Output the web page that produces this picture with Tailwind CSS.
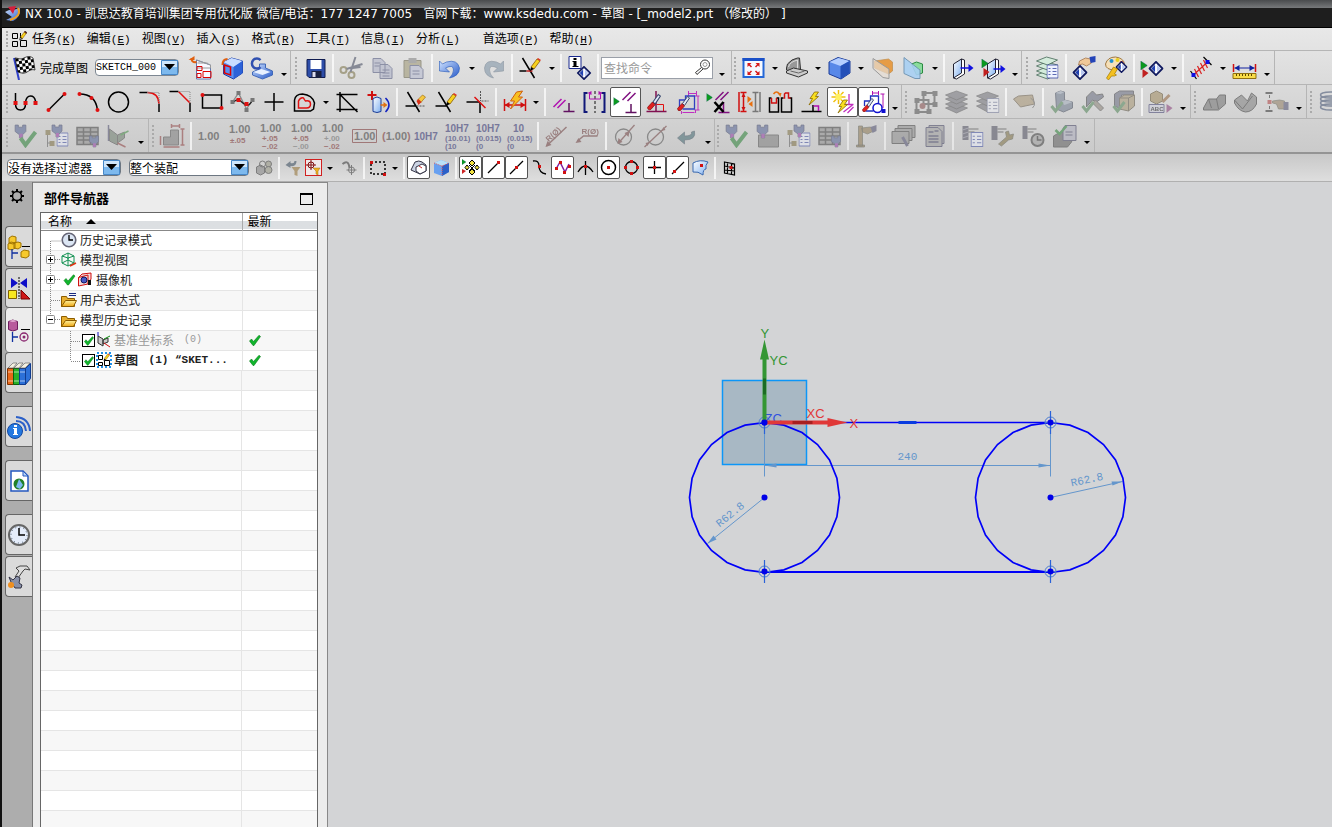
<!DOCTYPE html>
<html lang="zh-CN">
  <head>
    <meta charset="UTF-8" />
    <meta name="viewport" content="width=device-width, initial-scale=1.0" />
    <script src="https://cdn.jsdelivr.net/npm/@tailwindcss/browser@4"></script>
    <title>NX 10.0 - 草图</title>
  </head>
  <body class="flex h-screen flex-col overflow-hidden border-l-2 border-[#111] bg-[#d3d4d6] font-['Noto_Sans_CJK_SC','Liberation_Sans',sans-serif] text-xs text-black">
    <!-- Shared icon parts -->
    <svg class="absolute size-0" aria-hidden="true">
      <defs>
        <pattern id="checker" width="6" height="6" patternUnits="userSpaceOnUse" patternTransform="rotate(-8)">
          <path fill="#fff" d="M0 0h6v6H0z" /><path d="M0 0h3v3H0zM3 3h3v3H3z" />
        </pattern>
        <linearGradient id="blue" x1="0" y1="0" x2="1" y2="1"><stop stop-color="#cfe2ff" /><stop offset="1" stop-color="#2558c8" /></linearGradient>
        <linearGradient id="pale" x1="0" y1="0" x2="1" y2="1"><stop stop-color="#fff" /><stop offset="1" stop-color="#7fb0f0" /></linearGradient>
        <linearGradient id="gold" x1="0" y1="0" x2="0" y2="1"><stop stop-color="#fff3a0" /><stop offset="1" stop-color="#eda512" /></linearGradient>
      </defs>
      <symbol id="dn" viewBox="0 0 12 24"><path d="M3 11h6l-3 3z" /></symbol>
      <symbol id="end" viewBox="0 0 12 24"><path d="M3 17h6l-3 3z" /></symbol>
      <symbol id="check" viewBox="0 0 12 12"><path fill="#10b52c" stroke="#067a18" stroke-width=".6" d="M.5 6.500 2.500 4.500 4.500 7 10 .8 11.500 2 5 11H4z" /></symbol>
      <symbol id="pencil" viewBox="0 0 12 14"><path fill="#f7d21e" stroke="#8a5a00" stroke-width=".8" d="m2 9 6-8 3 2-6 8z" /><path fill="#e03020" d="m8 1 1-1 3 2-1 1z" /><path d="m2 9-1 4 4-2z" /></symbol>
      <symbol id="bolt" viewBox="0 0 12 14"><path fill="#f8e020" stroke="#8a6a00" stroke-width=".8" d="M7 .5h4L8 5h3L1.500 13.500 5 7H2.500z" /></symbol>
      <symbol id="driver" viewBox="0 0 14 16"><path fill="#dfe6f5" stroke="#3c4a70" d="m6 8 5-7 2 1.500L8 10z" /><path fill="#e02020" stroke="#700" stroke-width=".6" d="M1 13 5.500 8 8 10.500 4 15q-3 1-3-2z" /></symbol>
      <symbol id="diamond" viewBox="0 0 16 16"><path fill="#fff" stroke="#101a60" stroke-width="2" d="m8 1 7 7-7 7-7-7z" /><path fill="#2040b0" d="M7 4v8L3 8z" /><path fill="#b8c8f0" d="M9 4v8l4-4z" /></symbol>
      <symbol id="plug" viewBox="0 0 12 14"><path fill="#4a5a90" stroke="#222a50" stroke-width=".7" d="M1 1h3v2h4V1h3v6l-3 3v3H5v-3L1 7z" /><path fill="#9030a0" d="M5 9h3v4H5z" /></symbol>
      <symbol id="go" viewBox="0 0 6 8"><path fill="#0a9a1e" stroke="#055" stroke-width=".4" d="m0 0 6 4-6 4z" /></symbol>
      <symbol id="list" viewBox="0 0 12 14"><path fill="#eef2ff" stroke="#3545a0" d="M.5.5h11v13H.5z" /><path stroke="#3545a0" d="M2 4h2M6 4h4M2 7h2M6 7h4M2 10h2M6 10h4" /></symbol>
      <symbol id="box-check" viewBox="0 0 24 24"><path fill="none" stroke="#1d8a2a" stroke-width="3" d="m2 16 4 5 7-9" /></symbol>
    </svg>

    <header class="flex h-7 shrink-0 flex-col border-b border-black bg-[#1e1e1e]">
      <div class="h-2 shrink-0 bg-linear-to-b from-[#4a4c4e] to-[#77797b]"></div>
      <h1 class="-mt-1 flex items-center gap-1 pl-[3px] font-['DejaVu_Sans','Noto_Sans_CJK_SC',sans-serif] text-xs leading-5 whitespace-pre text-white">
        <svg class="h-4 w-4" viewBox="0 0 16 16"><path fill="url(#blue)" d="M0 6q5-3 8-2l7-2q1 9-7 13L1 14l6-3z" /><path fill="#d41f3c" d="m3 1 8-1-3 8z" /><path fill="none" stroke="#f0a020" stroke-width="2" d="M13 2q4 8-8 12" /></svg>
        <span>NX 10.0 - 凯思达教育培训集团专用优化版 微信/电话：177 1247 7005&#160; &#160;官网下载：www.ksdedu.com - 草图 - [_model2.prt （修改的） ]</span>
      </h1>
    </header>

    <div class="shrink-0 bg-linear-to-b from-[#e8e8e8] to-[#cacaca]">
      <nav class="flex h-[23px] items-center gap-[11px] border-b border-[#b5b5b5] pl-1 whitespace-nowrap [&_i]:font-['Liberation_Mono'] [&_i]:text-[11px] [&_i]:not-italic">
        <div class="-mr-1.5 flex items-center gap-1">
          <div class="h-4 border-l-2 border-dotted border-[#aaa]"></div>
          <svg class="h-4 w-[15px]" viewBox="0 0 15 16" fill="none" stroke="#000"><path d="M.5 2.500h5v5h-5zM.5 10.500h5v5h-5zM8.500 9.500h6v6h-6zM8.500 2v5" /><use href="#pencil" x="7" y="0" width="8" height="10" /></svg>
        </div>
        <a href="#">任务<i>(<u>K</u>)</i></a>
        <a href="#">编辑<i>(<u>E</u>)</i></a>
        <a href="#">视图<i>(<u>V</u>)</i></a>
        <a href="#">插入<i>(<u>S</u>)</i></a>
        <a href="#">格式<i>(<u>R</u>)</i></a>
        <a href="#">工具<i>(<u>T</u>)</i></a>
        <a href="#">信息<i>(<u>I</u>)</i></a>
        <a href="#" class="mr-3">分析<i>(<u>L</u>)</i></a>
        <a href="#">首选项<i>(<u>P</u>)</i></a>
        <a href="#">帮助<i>(<u>H</u>)</i></a>
      </nav>

      <!-- Standard toolbar -->
      <div class="flex h-[34px] border-b border-[#b5b5b5]">
        <div class="flex items-center border-r border-[#b5b5b5]">
          <div class="mx-1 h-[22px] border-l-2 border-dotted border-[#aaa]"></div>
          <button class="flex items-center gap-1" type="button">
            <svg class="h-6 w-6" viewBox="0 0 24 24"><path stroke="#3040c8" stroke-width="2" d="m2 2 5 22" /><path fill="url(#checker)" stroke="#000" stroke-width=".7" d="M3 2c3 0 5 2 9 0s6-2 9 0l2 12c-3-1-5 0-8 2s-6 1-9 0z" /></svg>
            完成草图
          </button>
          <label class="relative ml-[7px] mr-1.5 flex">
            <select aria-label="草图名称" class="h-[17px] w-[84px] appearance-none rounded-sm border border-[#7d8792] bg-white font-['Liberation_Mono'] text-[10px] leading-[15px] outline-none"><option>SKETCH_000</option></select>
            <svg class="pointer-events-none absolute top-px right-px h-[15px] w-[17px]" viewBox="0 0 17 15"><path fill="#7db9ee" stroke="#4888c8" d="M.5.5h16v14H.5z" /><path fill="#cfe6fb" d="M1 1h15v6H1z" /><path d="M3 4h11l-5.500 6z" /></svg>
          </label>
          <button type="button" title="定向到草图"><svg class="h-6 w-[31px]" viewBox="0 0 24 24"><path fill="#f8f8ff" stroke="#6078b0" d="m8 4 14 5v14H8z" /><path fill="none" stroke="#999" d="m8 4 14 5v3H8M9 7h10" /><path fill="none" stroke="#d00" d="M8.500 10.500h5v4h-5zM8.500 17.500h4v4h-4zM14.500 15.500h8v6h-8z" /><path fill="none" stroke="#e06010" stroke-width="2" d="M8 6q-5 1-5-4" /><path fill="#e06010" d="m0 4 6-4v4z" /></svg></button>
          <button type="button" title="定向到模型"><svg class="h-6 w-[31px]" viewBox="0 0 24 24"><path fill="#5a90f0" stroke="#1d3fa8" d="m4 6 8-4 11 3v12l-9 6-10-5z" /><path fill="#c8dcff" d="m4 6 8-4 11 3-9 6z" /><path fill="#2c62d8" d="m14 11 9-6v12l-9 6z" /><path fill="none" stroke="#d00" stroke-width="1.500" d="m5 9 6 2v8l-6-2z" /><path fill="none" stroke="#e06010" stroke-width="2" d="M8 3Q3 3 3 9" /></svg></button>
          <button type="button" title="重新附着"><svg class="h-6 w-[31px]" viewBox="0 0 24 24"><path fill="url(#blue)" stroke="#4068b8" d="m2 16 7-3V8h6v4l7 3v4l-10 4-10-4z" /><path fill="#e8f1ff" d="m3 16 8-3 9 3-8 3z" /><path fill="none" stroke="#3050b0" stroke-width="2.500" d="M10 4a5 5 0 1 0 0 7" /></svg></button>
          <button type="button" title="更多"><svg class="h-6 w-3"><use href="#end" /></svg></button>
        </div>
        <div class="flex items-center border-r border-[#b5b5b5]">
          <div class="mx-1 h-[22px] w-0 border-l-2 border-dotted border-[#aaa]"></div>
          <button type="button" title="保存"><svg class="h-6 w-[29px]" viewBox="0 0 24 24"><path fill="#2d4da8" stroke="#101c50" d="M3.500 3.500h18v18h-16l-2-2z" /><path fill="#fff" d="M7 4h11v9H7z" /><path fill="#1a2040" d="M8 15h10v7H8z" /><path fill="#dde" d="M9 16h3v5H9z" /></svg></button>
          <div class="mx-0.5 h-7 border-l-2 border-white/70"></div>
          <div class="flex opacity-60">
            <button type="button" title="剪切"><svg class="h-6 w-[31px]" viewBox="0 0 24 24" fill="none" stroke="#4c5266" stroke-width="2"><circle cx="4" cy="14" r="3" stroke="#807850" /><circle cx="12" cy="19" r="3" stroke="#807850" /><path d="m7 13 16-5M11 16l5-15M13 12l8-1" /></svg></button>
            <button type="button" title="复制"><svg class="h-6 w-[31px]" viewBox="0 0 24 24" fill="#b0b4c8" stroke="#565c80"><path d="M2.500 2.500h8l4 4v10h-12zM9.500 8.500h8l4 4v10h-12z" /><path d="M4 7h6M4 10h5M12 14h7M12 17h7M12 20h7" /></svg></button>
            <button type="button" title="粘贴"><svg class="h-6 w-[31px]" viewBox="0 0 24 24"><path fill="#a09a78" stroke="#6c6850" d="M2.500 4.500h17v17h-17z" /><path fill="#888" d="M7 2h8v5H7z" /><path fill="#b8bcd0" stroke="#565c80" d="M8.500 9.500h9l4 4v9h-13z" /><path stroke="#565c80" d="M11 15h7M11 18h7" /></svg></button>
          </div>
          <div class="mx-0.5 h-7 border-l-2 border-white/70"></div>
          <button type="button" title="撤消"><svg class="h-6 w-[31px]" viewBox="0 0 24 24"><path fill="url(#blue)" stroke="#2458b8" stroke-width=".6" d="M1 5v10l10 1-4-4q8-4 8 2 0 4-4 8 10-2 10-10Q19 3 8 6L4 8z" /></svg></button>
          <button type="button" title="撤消列表"><svg class="h-6 w-3"><use href="#dn" /></svg></button>
          <button type="button" title="重做"><svg class="h-6 w-[31px] opacity-60" viewBox="0 0 24 24"><path fill="#8296a8" stroke="#566678" stroke-width=".6" d="M22 5v10l-10 1 4-4q-8-4-8 2 0 4 4 8Q3 20 3 12 4 3 15 6l4 2z" /></svg></button>
          <div class="mx-0.5 h-7 border-l-2 border-white/70"></div>
          <button type="button" title="快速修剪"><svg class="h-6 w-[31px]" viewBox="0 0 24 24"><path stroke="#000" stroke-width="1.500" d="M4 2l12 20M1 15h7" /><path stroke="#c02020" stroke-width="1.500" d="M8 15h6" /><use href="#pencil" x="10" y="2" width="13" height="14" /></svg></button>
          <button type="button" title="修剪列表"><svg class="h-6 w-3"><use href="#dn" /></svg></button>
          <div class="mx-0.5 h-7 border-l-2 border-white/70"></div>
          <button type="button" title="信息"><svg class="h-6 w-[31px]" viewBox="0 0 24 24"><path fill="#fff" stroke="#1a2a90" d="M1.500.5h12v12h-12z" /><path d="M6 2h3v2H6zM5 5h4v5h2v1H5v-1h1V6H5z" /><use href="#diamond" x="9" y="10" width="15" height="14" /></svg></button>
          <div class="mx-0.5 h-7 border-l-2 border-white/70"></div>
          <label class="relative flex">
            <input type="search" aria-label="查找命令" placeholder="查找命令" class="h-[22px] w-[112px] border border-[#9a9fa8] bg-white px-0.5 outline-none placeholder:text-[#999]" />
            <svg class="absolute top-0.5 right-0.5 size-4" viewBox="0 0 16 16" fill="none" stroke="#333"><circle cx="10" cy="5.500" r="4.500" /><circle cx="10" cy="5.500" r="2" stroke="#999" /><path d="m6.500 8.500-6 5 1.500 2 6-5.500" /></svg>
          </label>
          <button type="button" title="更多"><svg class="h-6 w-[18px]"><use href="#end" /></svg></button>
        </div>
        <div class="flex items-center border-r border-[#b5b5b5]">
          <div class="mx-0.5 h-[22px] border-l-2 border-dotted border-[#aaa]"></div>
          <button type="button" title="适合窗口"><svg class="h-6 w-[31px]" viewBox="0 0 24 24"><path fill="#f6f9ff" stroke="#2468d8" stroke-width="2" d="M2 3h20v18H2z" /><path fill="#1a50c8" d="M1 2h22v3H1z" /><path stroke="#d81818" stroke-width="1.500" d="m7 8 3 3M17 8l-3 3M7 18l3-3M17 18l-3-3" /><path fill="#d81818" d="M6 7h4l-4 4zM18 7h-4l4 4zM6 19h4l-4-4zM18 19h-4l4-4z" /></svg></button>
          <button type="button" title="适合列表"><svg class="h-6 w-3"><use href="#dn" /></svg></button>
          <button type="button" title="定向视图"><svg class="h-6 w-[31px]" viewBox="0 0 24 24" stroke="#333"><path fill="#999" d="m2 12 1-4q4-5 10-6h2l1 11-8 3-6-2z" /><path fill="none" stroke="#ddd" d="M4 11q1-5 9-7v9" /><path fill="#ccc" d="m2 15 7-3 14 3v2l-9 4-12-4z" /><path stroke="#666" d="m6 15 8 2 6-2" fill="none" /></svg></button>
          <button type="button" title="视图列表"><svg class="h-6 w-3"><use href="#dn" /></svg></button>
          <button type="button" title="着色"><svg class="h-6 w-[31px]" viewBox="0 0 24 24"><path fill="#5888e8" stroke="#1c3c98" d="m1.500 6 9-4.500L22.500 5v12l-9 6-12-5z" /><path fill="#b4ceff" d="m2 6 9-4 11 3-9 5z" /><path fill="#2450b8" d="m13 10 9-5v12l-9 6z" /></svg></button>
          <button type="button" title="着色列表"><svg class="h-6 w-3"><use href="#dn" /></svg></button>
          <button type="button" title="截面"><svg class="h-6 w-[31px] opacity-80" viewBox="0 0 24 24"><path fill="#e88c20" stroke="#b87828" stroke-width=".7" d="m4 5 14-2 4 3v9l-4 3-14-6z" /><path fill="#e8ddd0" fill-opacity=".7" stroke="#888" d="M2.500 2.500 18.500 13v9.500l-6-1-10-9z" /></svg></button>
          <button type="button" title="编辑截面"><svg class="h-6 w-[31px]" viewBox="0 0 24 24"><path fill="#8adc9c" stroke="#2a8a40" d="m10 8 5-2 6 2v9l-6 2z" /><path fill="#a8d0f4" stroke="#6a90b0" d="M2.500 1.500 18.500 14v8.500h-5l-11-5z" opacity=".9" /></svg></button>
          <button type="button" title="截面列表"><svg class="h-6 w-3"><use href="#dn" /></svg></button>
          <div class="mx-0.5 h-7 border-l-2 border-white/70"></div>
          <button type="button" title="移动面"><svg class="h-6 w-[31px]" viewBox="0 0 24 24"><path fill="#fff" stroke="#223" d="m11 3 3 1v14l-8 5-3-1z" /><path fill="url(#pale)" stroke="#223" d="m3 8 8-5v14l-8 5z" /><path stroke="#1010e0" stroke-width="1.500" d="M10 12h9" /><path fill="#1010e0" d="m18 8 5 4-5 4z" /></svg></button>
          <button type="button" title="偏置区域"><svg class="h-6 w-[31px]" viewBox="0 0 24 24"><path fill="#fff" stroke="#223" d="m14 3 3 1v14l-8 5-3-1z" /><path fill="url(#pale)" stroke="#223" d="m6 8 8-5v14l-8 5z" /><use href="#go" x="0" y="3" width="7" height="9" /><path fill="#c02020" d="m2 12 6 4-6 5z" /><path stroke="#1010e0" stroke-width="1.500" d="M12 13h8" /><path fill="#1010e0" d="m19 9 5 4-5 4z" /></svg></button>
          <button type="button" title="更多"><svg class="h-6 w-3"><use href="#end" /></svg></button>
        </div>
        <div class="flex items-center border-r border-[#b5b5b5]">
          <div class="mx-1 h-[22px] border-l-2 border-dotted border-[#aaa]"></div>
          <button type="button" title="图层设置"><svg class="h-6 w-[31px]" viewBox="0 0 24 24" fill="#d4ecdc" stroke="#465" stroke-width=".8"><path d="m1 19 10-4 11 3-10 5z" /><path d="m1 15 10-4 11 3-10 5z" /><path d="m1 10 10-4 11 3-10 5z" /><path d="m1 5 10-4 11 3-10 5z" /><use href="#list" x="11" y="8" width="12" height="15" /></svg></button>
          <div class="mx-0.5 h-7 border-l-2 border-white/70"></div>
          <button type="button" title="显示"><svg class="h-6 w-[31px]" viewBox="0 0 24 24"><use href="#diamond" x="0" y="9" width="15" height="15" /><path fill="#f0c898" stroke="#9a6a40" stroke-width=".7" d="m7 5 6-3 5 1 1 4-5 3-4-2-4 1z" /><path fill="#2444b8" d="m17 1 6-1v6l-5 1z" /></svg></button>
          <button type="button" title="编辑对象显示"><svg class="h-6 w-[31px]" viewBox="0 0 24 24"><path fill="#f6e0b8" stroke="#a07840" d="M2 8q2-7 10-7 8 1 9 7l-6 3-3 3q-10 0-10-6z" /><circle cx="8" cy="5" r="2" fill="#2090d0" /><circle cx="14" cy="4" r="2" fill="#e8d020" /><circle cx="18" cy="7" r="2" fill="#d03020" /><use href="#diamond" x="12" y="5" width="12" height="12" /><path fill="#f4c020" stroke="#a07800" stroke-width=".7" d="m3 22 7-11 4 2-3 5 2 1-2 1-3 0-3 4z" /></svg></button>
          <div class="mx-0.5 h-7 border-l-2 border-white/70"></div>
          <button type="button" title="显示和隐藏"><svg class="h-6 w-[31px]" viewBox="0 0 24 24"><use href="#go" x="0" y="5" width="7" height="9" /><path fill="#c02020" d="m2 13 6 4-6 5z" /><use href="#diamond" x="8" y="5" width="15" height="15" /></svg></button>
          <button type="button" title="显示列表"><svg class="h-6 w-3"><use href="#dn" /></svg></button>
          <div class="mx-0.5 h-7 border-l-2 border-white/70"></div>
          <button type="button" title="测量"><svg class="h-6 w-[31px]" viewBox="0 0 24 24" stroke="#d82020" stroke-width="1.200"><path d="M5 18 18 6M5 13l4 8M8 10l4 8M11 7l4 8M14 4l4 8" /><path stroke="#000" d="m1 15 6 8M14 1l8 8" /><path fill="#1010e0" stroke="none" d="M2 17h4v4H2zM16 4h4v4h-4z" /></svg></button>
          <button type="button" title="测量列表"><svg class="h-6 w-3"><use href="#dn" /></svg></button>
          <button type="button" title="测量距离"><svg class="h-6 w-[31px]" viewBox="0 0 24 24"><path stroke="#d01010" stroke-width="1.500" d="M1 8v8M23 8v8" /><path stroke="#1020a0" d="M2 12h20" /><path fill="#1020a0" d="m2 12 5-3v6zM22 12l-5-3v6z" /><path fill="#f8dc48" stroke="#907010" d="M.5 17.500h23v5H.5z" /><path stroke="#604800" d="M4 18v2M7 18v2M10 18v2M13 18v2M16 18v2M19 18v2" /></svg></button>
          <button type="button" title="更多"><svg class="h-6 w-3.5"><use href="#end" /></svg></button>
        </div>
      </div>

      <!-- Sketch tools -->
      <div class="flex h-[34px] border-b border-[#b5b5b5]">
        <div class="flex shrink-0 items-center border-r border-[#b5b5b5]">
          <div class="mr-0.5 ml-1 h-[22px] border-l-2 border-dotted border-[#aaa]"></div>
          <button type="button" title="轮廓"><svg class="h-6 w-[31px]" viewBox="0 0 24 24"><path fill="none" stroke="#000" stroke-width="1.500" d="M2 3v11q0 6 5 6t5-6V12q1-6 5-6t5 5v3" /><path fill="#e01010" d="M0 11h4v4H0zM10 11h4v4h-4zM20 11h4v4h-4z" /></svg></button>
          <button type="button" title="直线"><svg class="h-6 w-[31px]" viewBox="0 0 24 24"><path stroke="#000" stroke-width="1.500" d="M4 20 20 4" /><circle cx="4" cy="20" r="2" fill="#e01010" /><circle cx="20" cy="4" r="2" fill="#e01010" /></svg></button>
          <button type="button" title="圆弧"><svg class="h-6 w-[31px]" viewBox="0 0 24 24"><path fill="none" stroke="#000" stroke-width="1.500" d="M4 4q16 0 18 16" /><circle cx="4" cy="4" r="2" fill="#e01010" /><circle cx="16" cy="8" r="2" fill="#e01010" /><circle cx="22" cy="20" r="2" fill="#e01010" /></svg></button>
          <button type="button" title="圆"><svg class="h-6 w-[31px]" viewBox="0 0 24 24"><circle cx="12" cy="12" r="10" fill="none" stroke="#000" stroke-width="1.500" /></svg></button>
          <button type="button" title="圆角"><svg class="h-6 w-[31px]" viewBox="0 0 24 24" fill="none"><path stroke="#000" stroke-width="1.500" d="M2 2.500h8M21.500 14v8" /><path stroke="#e01010" stroke-width="1.500" d="M10 2.500q11 0 11.500 11.500" /><path stroke="#888" stroke-dasharray="1 1" d="M10 2.500h11.500V14" /></svg></button>
          <button type="button" title="倒斜角"><svg class="h-6 w-[31px]" viewBox="0 0 24 24" fill="none"><path stroke="#000" stroke-width="1.500" d="M1 1.500h9M21.500 13v9" /><path stroke="#e01010" stroke-width="1.500" d="m10 1.500 11.500 11.500" /><path stroke="#888" stroke-dasharray="1 1" d="M10 1.500h11.500V13" /></svg></button>
          <button type="button" title="矩形"><svg class="h-6 w-[31px]" viewBox="0 0 24 24"><path fill="none" stroke="#000" stroke-width="1.500" d="M3 5h19v13H3z" /><circle cx="3" cy="5" r="2" fill="#e01010" /><circle cx="22" cy="18" r="2" fill="#e01010" /></svg></button>
          <button type="button" title="艺术样条"><svg class="h-6 w-[31px]" viewBox="0 0 24 24" fill="none"><path stroke="#888" stroke-width="1.300" d="M2 12 8 3l8 16 6-9" /><path stroke="#222" stroke-width="1.300" d="M3 12q4-4 7-1t6 4 6-5" /><path fill="#777" d="M6 1h4v4H6zM0 10h4v4H0zM14 18h4v4h-4zM20 8h4v4h-4z" /><path fill="#e01010" d="M6 8h4v4H6zM14 12h4v4h-4z" /></svg></button>
          <button type="button" title="点"><svg class="h-6 w-[31px]" viewBox="0 0 24 24"><path stroke="#000" stroke-width="1.500" d="M12.500 3v18M3 12h19" /></svg></button>
          <button type="button" title="偏置曲线"><svg class="h-6 w-[31px]" viewBox="0 0 24 24" fill="none" stroke-width="1.500"><path stroke="#000" d="M2 21V10q1-6 8-6 10 1 12 9l-1 6-3 2z" /><path stroke="#e01010" d="M6 18v-7q2-4 5-3 1 2 2 3 5-1 5 3t-4 4z" /></svg></button>
          <button type="button" title="偏置列表"><svg class="h-6 w-3"><use href="#dn" /></svg></button>
          <button type="button" title="派生直线"><svg class="h-6 w-[31px]" viewBox="0 0 24 24"><path fill="none" stroke="#000" stroke-width="1.500" d="M1 4.500h21M4.500 2v20M1 19.500h21M4 4l18 18" /></svg></button>
          <button type="button" title="投影曲线"><svg class="h-6 w-[31px]" viewBox="0 0 24 24"><path stroke="#d01010" stroke-width="2" d="M1 5h9M5.500 1v9" /><path fill="url(#pale)" stroke="#1a3c98" d="M6.500 8.500q4-3 8 0v13q-4 2-8 0z" /><path stroke="#e07010" stroke-width="1.500" d="M14 15h5" /><path fill="#e07010" d="m17 12 4 3-4 3z" /><path fill="none" stroke="#1020c0" stroke-width="1.500" d="M19 8q7 7 0 14" /></svg></button>
          <div class="mx-0.5 h-7 border-l-2 border-white/70"></div>
          <button type="button" title="快速修剪"><svg class="h-6 w-[31px]" viewBox="0 0 24 24"><path stroke="#000" stroke-width="1.500" d="M4 2l12 20M2 16h10" /><path stroke="#555" stroke-dasharray="2 1" d="M13 16h9" /><path fill="#f5c840" stroke="#a07010" stroke-width=".7" d="m14 10 5-5 3 2-5 6z" /><path fill="#d83018" d="m13 11 2-2 3 3-3 3z" /></svg></button>
          <button type="button" title="快速延伸"><svg class="h-6 w-[31px]" viewBox="0 0 24 24"><path stroke="#000" stroke-width="1.500" d="M4 2l12 20M1 16h12" /><use href="#pencil" x="10" y="3" width="13" height="14" /></svg></button>
          <button type="button" title="制作拐角"><svg class="h-6 w-[31px]" viewBox="0 0 24 24"><path stroke="#000" stroke-width="1.500" d="M1 12h13M14.500 12v11" /><path stroke="#555" stroke-dasharray="2 1" d="M15 1v10M16 11h7" /><path stroke="#e01010" stroke-width="1.500" d="m9 7 11 11" /></svg></button>
          <div class="mx-0.5 h-7 border-l-2 border-white/70"></div>
          <button type="button" title="快速尺寸"><svg class="h-6 w-[31px]" viewBox="0 0 24 24"><path stroke="#d01010" stroke-width="1.500" d="M2 9v12M23 9v12M2 15h20" /><path fill="#d01010" d="m2 15 5-3v6zM23 15l-5-3v6z" /><path fill="#f8c020" stroke="#d06010" d="m14 2 6-1-4 6h4L8 19l4-8H8z" /></svg></button>
          <button type="button" title="尺寸列表"><svg class="h-6 w-3"><use href="#dn" /></svg></button>
          <div class="mx-0.5 h-7 border-l-2 border-white/70"></div>
          <button type="button" title="几何约束"><svg class="h-6 w-[31px]" viewBox="0 0 24 24" stroke="#b010b0" stroke-width="1.500"><path d="m2 17 8-8M6 18l8-8" /><path stroke="#601060" d="M17.500 13v8M12 21.500h11" /></svg></button>
          <button type="button" title="设为对称"><svg class="h-6 w-[31px]" viewBox="0 0 24 24"><path fill="none" stroke="#101878" stroke-width="2" d="M5 3H2v19h3M19 3h3v19h-3" /><path stroke="#111" stroke-dasharray="3 2" d="M12.500 1v22" /><path fill="none" stroke="#b010b0" d="M7 4v5h11V4" /><path fill="#b010b0" d="m5 3 4-2v4zM20 3l-4-2v4z" /></svg></button>
          <button type="button" title="显示草图约束" class="rounded-xs border border-[#555] bg-white py-0.5"><svg class="h-6 w-[29px]" viewBox="0 0 24 24" stroke="#801080" stroke-width="1.500"><use href="#go" x="0" y="7" width="6" height="9" /><path d="m9 10 8-8M14 11l8-8" /><path stroke="#601060" d="M17.500 14v8M12 22.500h11" /></svg></button>
          <button type="button" title="自动约束"><svg class="h-6 w-[31px]" viewBox="0 0 24 24"><path stroke="#801050" stroke-width="1.500" d="M11.500 1v20M2 21.500h20" /><path fill="none" stroke="#e01010" d="M12 14.500h7V21" /><use href="#driver" x="2" y="3" width="15" height="18" /></svg></button>
          <button type="button" title="自动标注尺寸"><svg class="h-6 w-[31px]" viewBox="0 0 24 24" fill="none"><path stroke="#c030c0" d="M13 1v5M21 1v5M13 3.500h8M19 6h5M22.500 6v14M19 20h5M6 21v3M20 20v3M7 22.500h12" /><path stroke="#3040c0" stroke-width="1.300" d="M4 18V10h6V6h9v13H7" /><use href="#driver" x="1" y="5" width="14" height="17" /></svg></button>
          <button type="button" title="关系浏览器"><svg class="h-6 w-[31px]" viewBox="0 0 24 24" stroke-width="1.500"><use href="#go" x="0" y="3" width="6" height="9" /><path stroke="#801080" d="m9 10 8-8M14 10l8-8M17 12v10M12 22.500h11" /><path stroke="#000" stroke-width="2.500" d="m8 12 9 10M17 12 8 22" /></svg></button>
          <button type="button" title="动画尺寸"><svg class="h-6 w-[31px]" viewBox="0 0 24 24"><path stroke="#d01010" stroke-width="1.500" d="M1.500 2v20M3 2.500h6M3 21.500h6M6 3v18" /><path fill="#d01010" d="m6 3 2 4H4zM6 21l2-4H4z" /><path stroke="#777" stroke-width="1.500" d="M22.500 2v20M15 2.500h6M15 21.500h6M18 3v18" /><path fill="#e87010" d="m10 6 4 3-4 4zM15 11v6l-4-3z" /></svg></button>
          <button type="button" title="转换参考"><svg class="h-6 w-[31px]" viewBox="0 0 24 24" fill="none" stroke-width="1.500"><path stroke="#000" d="M3 8H1v14h9V8H8M15 8h-2v14h10V8h-2" /><path stroke="#d01010" d="M3 8v5h5V8M15 8h1V4l1-1h3v5h2" /><path stroke="#e87010" d="M5 4q3-4 6 0" /><path fill="#e87010" d="m9 3 4 0-1 4z" /></svg></button>
          <button type="button" title="备选解"><svg class="h-6 w-[31px]" viewBox="0 0 24 24" stroke-width="1.500"><path stroke="#000" d="M2 21.500h20M13.500 15v7" /><path fill="none" stroke="#b010b0" d="M14 16h5v5" /><use href="#bolt" x="8" y="1" width="12" height="15" /></svg></button>
          <button type="button" title="推断约束" class="rounded-xs border border-[#555] bg-white py-0.5"><svg class="h-6 w-[29px]" viewBox="0 0 24 24"><path stroke="#c030c0" stroke-width="1.300" d="M18.500 4v10M14 14.500h9M13 22l9-7M17 23l6-6" /><path stroke="#f0c010" stroke-width="1.500" d="m3 2 10 10M13 2 3 12M8 0v14M1 7h14" /><path fill="#fff060" d="M5 4h6v6H5z" /><use href="#bolt" x="6" y="9" width="12" height="15" /></svg></button>
          <button type="button" title="连续自动标注" class="rounded-xs border border-[#555] bg-white py-0.5"><svg class="h-6 w-[29px]" viewBox="0 0 24 24" fill="none"><path stroke="#b010b0" d="M11 1v4M17 1v4M11 3h6M19 4h4M21.500 4v14" /><path stroke="#2030c0" stroke-width="1.300" d="M3 16v-5h6V6h8v7M4 21h8" /><circle cx="16" cy="18" r="4.500" stroke="#1010d0" stroke-width="1.500" /><path fill="#1010d0" d="M20 19h4v4h-4z" /><use href="#driver" x="0" y="7" width="13" height="16" /></svg></button>
          <button type="button" title="更多"><svg class="h-6 w-3"><use href="#end" /></svg></button>
        </div>
        <div class="flex shrink-0 items-center border-r border-[#b5b5b5]">
          <div class="mx-[3px] h-[22px] border-l-2 border-dotted border-[#aaa]"></div>
          <div class="flex items-center opacity-50 grayscale-50">
            <button type="button" title="组"><svg class="h-6 w-[31px]" viewBox="0 0 24 24"><path fill="none" stroke="#444" stroke-width="2" d="M10 3h11v11H10zM3 10h12v12H3z" /><path fill="#444" d="M8 1h5v5H8zM19 1h5v5h-5zM19 12h5v5h-5zM1 8h5v5H1zM1 19h5v5H1zM13 19h5v5h-5z" /><circle cx="9" cy="16" r="3" fill="#a33" /></svg></button>
            <button type="button" title="图层"><svg class="h-6 w-[31px]" viewBox="0 0 24 24" fill="#667" stroke="#333" stroke-width=".7"><path d="m1 18 11-4 11 4-11 5z" /><path d="m1 14 11-4 11 4-11 5z" /><path d="m1 9 11-4 11 4-11 5z" /><path d="m1 5 11-4 11 4-11 5z" /></svg></button>
            <button type="button" title="图层类别"><svg class="h-6 w-[31px]" viewBox="0 0 24 24" fill="#667" stroke="#333" stroke-width=".7"><path d="m1 16 11-4 11 4-11 6z" /><path d="m1 11 11-4 11 4-11 5z" /><path d="m1 6 11-4 11 4-11 5z" /><use href="#list" x="11" y="8" width="13" height="15" /></svg></button>
          </div>
          <div class="mx-0.5 h-7 border-l-2 border-white/70"></div>
          <button type="button" title="标签" class="opacity-50"><svg class="h-6 w-[31px]" viewBox="0 0 24 24"><path fill="#a08c68" stroke="#5c4e38" d="m1 9 5-3 14-1 2 9-14 3z" /><path fill="none" stroke="#555" d="M18 8q7 5 2 10" /></svg></button>
          <div class="mx-0.5 h-7 border-l-2 border-white/70"></div>
          <div class="flex items-center opacity-50 grayscale-50">
            <button type="button" title="检查实体"><svg class="h-6 w-[31px]" viewBox="0 0 24 24"><path fill="#56709a" stroke="#2c3c60" d="M6 3 11 1l4 1v8l8 2v6l-9 4-7-3z" /><path fill="#8ea6c8" d="m6 3 5-2 4 1-4 2zM11 12l5-2 7 2-8 3z" /><use href="#box-check" width="24" height="24" /></svg></button>
            <button type="button" title="检查装配"><svg class="h-6 w-[31px]" viewBox="0 0 24 24"><path fill="#56608a" stroke="#333" d="m6 7 6-6 4 4 6-1 1 3-7 5-4-2-6 7z" /><path fill="#8a7860" stroke="#444" d="m12 13 3-3 8 8-3 3z" /><use href="#box-check" width="24" height="24" /></svg></button>
            <button type="button" title="检查部件"><svg class="h-6 w-[31px]" viewBox="0 0 24 24"><path fill="#56608a" stroke="#334" d="M3 4 8 1h14v4H10v14l-7-3z" /><path fill="#b08c40" stroke="#554420" d="m8 8 5-3h10v11l-6 5-9-2z" /><path fill="none" stroke="#554420" d="M8 8h9v13M17 8l6-3" /><use href="#box-check" width="24" height="24" /></svg></button>
          </div>
          <div class="mx-0.5 h-7 border-l-2 border-white/70"></div>
          <button type="button" title="重命名" class="opacity-50"><svg class="h-6 w-[31px]" viewBox="0 0 24 24"><path fill="#988050" stroke="#554420" d="m2 4 6-3 6 3v7l-6 3-6-3z" /><path stroke="#8a5a30" stroke-width="3" d="m14 12 7-7" /><path fill="#ccd" stroke="#336" d="M.5 14.500h15v8H.5z" /><text x="2" y="21" font-family="Liberation Sans" font-size="6" font-weight="bold">ABC</text><path fill="#803070" d="m18 14 6 4-6 5z" /></svg></button>
          <button type="button" title="更多"><svg class="h-6 w-3.5"><use href="#end" /></svg></button>
        </div>
        <div class="flex shrink-0 items-center border-r border-[#b5b5b5]">
          <div class="mx-[3px] h-[22px] border-l-2 border-dotted border-[#aaa]"></div>
          <div class="flex items-center opacity-50">
            <button type="button" title="折弯"><svg class="h-6 w-[31px]" viewBox="0 0 24 24" fill="#666" stroke="#222"><path d="m1 18 5-9h8l3-4h6v9l-7 6H1z" /><path d="m6 9 3 9M14 9l2 10" /></svg></button>
            <button type="button" title="面"><svg class="h-6 w-[31px]" viewBox="0 0 24 24" fill="#777" stroke="#222"><path d="m1 10 7-5 6 6 4-8 5 4v7q-4 8-11 8-7-1-11-9z" /><path fill="none" d="m1 10 8 9 10-13" /></svg></button>
            <button type="button" title="选择面"><svg class="h-6 w-[31px]" viewBox="0 0 24 24"><path stroke="#222" stroke-width="2" d="M1 3h7M1 21h7" /><path fill="#a33" d="M3 10h4v4H3z" /><path stroke="#222" d="M5 5v3M5 16v3" /><path fill="#8a7458" stroke="#443" stroke-width=".7" d="m8 11 7-1 5 1v8l-6 0-2-5-4-1z" /><path fill="#446" d="M19 12h5v8h-5z" /></svg></button>
          </div>
          <button type="button" title="更多"><svg class="h-6 w-3.5"><use href="#end" /></svg></button>
        </div>
        <div class="flex shrink-0 items-center">
          <div class="mx-[3px] h-[22px] border-l-2 border-dotted border-[#aaa]"></div>
          <button type="button" title="弹簧" class="opacity-50"><svg class="h-6 w-[31px]" viewBox="0 0 24 24" fill="none" stroke="#346" stroke-width="1.500"><ellipse cx="12" cy="5" rx="10" ry="3" /><ellipse cx="12" cy="9" rx="10" ry="3" /><ellipse cx="12" cy="13" rx="10" ry="3" /><ellipse cx="12" cy="17" rx="10" ry="3" /></svg></button>
        </div>
      </div>

      <!-- Annotation tools, unavailable while sketching -->
      <div class="flex h-[35px] items-stretch border-b-2 border-[#949494] [&_text]:font-['Liberation_Sans'] [&_text]:font-bold">
        <div class="flex items-center border-r border-[#b5b5b5]">
          <div class="mr-0.5 ml-1 h-[22px] border-l-2 border-dotted border-[#aaa]"></div>
          <div class="flex opacity-50">
            <button type="button" title="完成"><svg class="h-6 w-[31px]" viewBox="0 0 24 24"><use href="#plug" x="0" y="0" width="14" height="15" /><path fill="none" stroke="#1d7a2a" stroke-width="4" d="m7 14 5 7L22 8" /></svg></button>
            <button type="button" title="结构"><svg class="h-6 w-[31px]" viewBox="0 0 24 24"><path fill="#776838" d="M1 6h5v5H1zM5 17h5v5H5z" /><path fill="none" stroke="#555" d="M3 11v12M3 19h3" /><use href="#list" x="12" y="8" width="12" height="15" /><use href="#plug" x="6" y="0" width="13" height="14" /></svg></button>
            <button type="button" title="表格"><svg class="h-6 w-[31px]" viewBox="0 0 24 24"><path fill="#888" stroke="#333" stroke-width="1.500" d="M1.500 3.500h21v17h-21zM1.500 8h21M1.500 12h21M1.500 16h21M8 4v16M15 4v16" /><use href="#plug" x="13" y="11" width="11" height="13" /></svg></button>
            <button type="button" title="基准"><svg class="h-6 w-[31px]" viewBox="0 0 24 24"><path stroke="#446" stroke-width="1.500" d="M2 1v16" /><path fill="#676" stroke="#444" d="m3 5 8 6v10L3 17zM11 11l7-3v6l-7 5z" /><path stroke="#383" stroke-width="1.500" d="m14 11 8-4" /><path stroke="#833" stroke-width="1.500" d="m11 19 8 4" /></svg></button>
          </div>
          <button type="button" title="更多"><svg class="h-6 w-3.5"><use href="#end" /></svg></button>
        </div>
        <div class="flex items-center border-r border-[#b5b5b5]">
          <div class="mx-[3px] h-[22px] border-l-2 border-dotted border-[#aaa]"></div>
          <button type="button" title="尺寸" class="opacity-50"><svg class="h-6 w-[31px]" viewBox="0 0 24 24"><path fill="#777" stroke="#444" d="M3 13h7V6h8v15H3z" /><path stroke="#833" stroke-width="1.500" d="M11 2h8M11 0v4M19 0v4M0 12v9M22 5v16M20 5h4M20 21h4M3 23h16" /></svg></button>
          <div class="mx-0.5 h-7 border-l-2 border-white/70"></div>
          <button type="button" title="无公差"><svg class="h-[30px] w-[31px]" viewBox="0 0 31 30"><text x="4" y="19" font-size="11" fill="#808080">1.00</text></svg></button>
          <button type="button" title="等双向公差"><svg class="h-[30px] w-[31px]" viewBox="0 0 31 30"><text x="4" y="12" font-size="11" fill="#808080">1.00</text><text x="5" y="22" font-size="8" fill="#a07878">±.05</text></svg></button>
          <button type="button" title="双向公差"><svg class="h-[30px] w-[31px]" viewBox="0 0 31 30"><text x="4" y="11" font-size="11" fill="#808080">1.00</text><text x="6" y="20" font-size="8" fill="#a07878">+.05</text><text x="6" y="28" font-size="8" fill="#a07878">−.02</text></svg></button>
          <button type="button" title="单向正公差"><svg class="h-[30px] w-[31px]" viewBox="0 0 31 30"><text x="4" y="11" font-size="11" fill="#808080">1.00</text><text x="6" y="20" font-size="8" fill="#a07878">+.05</text><text x="6" y="28" font-size="8" fill="#999">−.00</text></svg></button>
          <button type="button" title="单向负公差"><svg class="h-[30px] w-[31px]" viewBox="0 0 31 30"><text x="4" y="11" font-size="11" fill="#808080">1.00</text><text x="6" y="20" font-size="8" fill="#999">+.00</text><text x="6" y="28" font-size="8" fill="#a07878">−.02</text></svg></button>
          <button type="button" title="基本尺寸"><svg class="h-[30px] w-[31px]" viewBox="0 0 31 30"><path fill="none" stroke="#a07878" d="M3.500 8.500h24v13h-24z" /><text x="5" y="19" font-size="11" fill="#808080">1.00</text></svg></button>
          <button type="button" title="参考尺寸"><svg class="h-[30px] w-[31px]" viewBox="0 0 31 30"><text x="2" y="19" font-size="11" fill="#808080"><tspan fill="#a07878">(</tspan>1.00<tspan fill="#a07878">)</tspan></text></svg></button>
          <button type="button" title="公差代号"><svg class="h-[30px] w-[31px]" viewBox="0 0 31 30"><text x="3" y="19" font-size="10" fill="#77779a">10H7</text></svg></button>
          <button type="button" title="极限值"><svg class="h-[30px] w-[31px]" viewBox="0 0 31 30" fill="#77779a"><text x="3" y="11" font-size="10">10H7</text><text x="3" y="20" font-size="8">(10.01)</text><text x="3" y="28" font-size="8">(10</text></svg></button>
          <button type="button" title="配合公差"><svg class="h-[30px] w-[31px]" viewBox="0 0 31 30" fill="#77779a"><text x="3" y="11" font-size="10">10H7</text><text x="3" y="20" font-size="8">(0.015)</text><text x="3" y="28" font-size="8">(0</text></svg></button>
          <button type="button" title="偏差"><svg class="h-[30px] w-[31px]" viewBox="0 0 31 30" fill="#77779a"><text x="9" y="11" font-size="10">10</text><text x="3" y="20" font-size="8">(0.015)</text><text x="3" y="28" font-size="8">(0</text></svg></button>
          <div class="mx-0.5 h-7 border-l-2 border-white/70"></div>
          <div class="flex opacity-50">
            <button type="button" title="半径"><svg class="h-6 w-[31px]" viewBox="0 0 24 24"><path stroke="#633" stroke-width="1.500" d="M2 22 22 3" /><path fill="#633" d="m1 23 2-6 4 4z" /><text x="1" y="14" font-size="8" fill="#633" transform="rotate(-43 8 12)">R(Ø)</text></svg></button>
            <button type="button" title="折线半径"><svg class="h-6 w-[31px]" viewBox="0 0 24 24"><path fill="none" stroke="#633" stroke-width="1.500" d="m2 17 6-5h14" /><path fill="#633" d="m0 19 3-5 3 4z" /><text x="6" y="10" font-size="8" fill="#633">R(Ø)</text></svg></button>
          </div>
          <div class="mx-0.5 h-7 border-l-2 border-white/70"></div>
          <div class="flex opacity-50">
            <button type="button" title="直径"><svg class="h-6 w-[31px]" viewBox="0 0 24 24" fill="none" stroke="#444" stroke-width="1.300"><circle cx="11" cy="13" r="8" /><path stroke="#633" d="M6 19 22 1" /><path fill="#633" stroke="none" d="m5 20 1-6 4 4zM17 7l-1 6-4-4z" /></svg></button>
            <button type="button" title="外直径"><svg class="h-6 w-[31px]" viewBox="0 0 24 24" fill="none" stroke="#444" stroke-width="1.300"><circle cx="12" cy="13" r="8" /><path stroke="#633" d="M1 23 23 2" /><path fill="#633" stroke="none" d="m6 18-4 1 2 3zM18 7l4-1-2-3z" /></svg></button>
            <button type="button" title="返回"><svg class="h-6 w-[31px]" viewBox="0 0 24 24"><path fill="#366068" stroke="#234" stroke-width=".6" d="m3 14 7-6v4q8 0 7-4l3-1q2 9-10 9v4z" /></svg></button>
          </div>
          <button type="button" title="更多"><svg class="h-6 w-3"><use href="#end" /></svg></button>
        </div>
        <div class="flex items-center border-r border-[#b5b5b5]">
          <div class="mx-0.5 h-[22px] border-l-2 border-dotted border-[#aaa]"></div>
          <div class="flex items-center opacity-50">
            <button type="button" title="确认"><svg class="h-6 w-[31px]" viewBox="0 0 24 24"><use href="#plug" x="0" y="0" width="14" height="15" /><path fill="none" stroke="#1d7a2a" stroke-width="4" d="m7 14 5 7L22 8" /></svg></button>
            <button type="button" title="图样"><svg class="h-6 w-[31px]" viewBox="0 0 24 24"><path fill="#777" stroke="#444" d="M3 11h20v12H3z" /><use href="#plug" x="0" y="0" width="14" height="15" /></svg></button>
            <button type="button" title="属性"><svg class="h-6 w-[31px]" viewBox="0 0 24 24"><path fill="#776838" d="M1 6h5v5H1zM5 17h5v5H5z" /><path fill="none" stroke="#555" d="M3 11v12M3 19h3" /><use href="#list" x="12" y="8" width="12" height="15" /><use href="#plug" x="6" y="0" width="13" height="14" /></svg></button>
            <button type="button" title="明细表"><svg class="h-6 w-[31px]" viewBox="0 0 24 24"><path fill="#888" stroke="#333" stroke-width="1.500" d="M1.500 3.500h21v17h-21zM1.500 8h21M1.500 12h21M1.500 16h21M8 4v16M15 4v16" /><use href="#plug" x="13" y="11" width="11" height="13" /></svg></button>
            <div class="mx-0.5 h-7 border-l-2 border-white"></div>
            <button type="button" title="标志"><svg class="h-6 w-[31px]" viewBox="0 0 24 24"><path fill="#877048" stroke="#443" stroke-width=".7" d="M4 2h4v20H4zM2 21h8v2H2zM7 4l9-1 3 4-6 3-5-2z" /><path fill="#446" d="m16 3 6-2v6l-4 2z" /></svg></button>
            <div class="mx-0.5 h-7 border-l-2 border-white"></div>
            <button type="button" title="新建图纸"><svg class="h-6 w-[31px]" viewBox="0 0 24 24" fill="#888" stroke="#333"><path d="M6.500 1.500h17v12h-17z" /><path d="M3.500 4.500h17v12h-17z" /><path d="M.5 7.500h17v12H.5z" /><path stroke="#446" stroke-width="3" d="m11 13 5 9" /></svg></button>
            <button type="button" title="文档"><svg class="h-6 w-[31px]" viewBox="0 0 24 24" fill="#999" stroke="#335"><path d="M6.500 1.500h15v18h-15z" /><path d="M3.500 3.500h12l4 4v15h-16z" /><path stroke-width="1.500" d="M6 8h5M6 12h10M6 15h10M6 18h10M12 7h4" /></svg></button>
            <div class="mx-0.5 h-7 border-l-2 border-white"></div>
            <button type="button" title="孔表"><svg class="h-6 w-[31px]" viewBox="0 0 24 24"><path fill="#445" d="M3 2h6v14H3z" /><path stroke="#889" d="m3 6 6-2M3 10l6-2M3 14l6-2" /><path stroke="#333" d="M9 5h10M9 8h6" /><use href="#list" x="11" y="8" width="13" height="15" /></svg></button>
            <button type="button" title="修复"><svg class="h-6 w-[31px]" viewBox="0 0 24 24"><path fill="#445" d="M1 2h6v14H1z" /><path stroke="#333" d="M7 5h9M7 8h6" /><path fill="#776838" stroke="#443" stroke-width=".7" d="m8 20 8-7-1-5 3-1 1 4 4-1-1 5-4 1-7 6z" /></svg></button>
            <button type="button" title="历史"><svg class="h-6 w-[31px]" viewBox="0 0 24 24"><path fill="#445" d="M1 2h5v13H1z" /><path stroke="#333" d="M6 5h9M6 8h6" /><circle cx="16" cy="16" r="6" fill="#999" stroke="#333" stroke-width="2" /><path fill="none" stroke="#222" stroke-width="1.500" d="M16 12v4h4" /></svg></button>
            <button type="button" title="打印"><svg class="h-6 w-[31px]" viewBox="0 0 24 24"><path fill="#555" stroke="#333" d="m1 12 7-4h14l-3 10-4 5H1z" /><path fill="#aab" stroke="#335" d="M12.500 1.500h11v15h-13v-12z" /><path stroke="#335" d="M13 8h7M13 11h7" /><path fill="none" stroke="#1d7a2a" stroke-width="2.500" d="m3 6 4 4 7-8" /></svg></button>
          </div>
          <button type="button" title="更多"><svg class="h-6 w-3.5"><use href="#end" /></svg></button>
        </div>
      </div>
    </div>

    <!-- Selection bar -->
    <div class="flex h-7 shrink-0 items-center border-b border-[#b0b0b0] bg-linear-to-b from-[#c8c8c8] to-[#dedede] pl-[5px]">
      <label class="relative mr-2 flex">
        <select aria-label="选择过滤器" class="h-[17px] w-[114px] appearance-none rounded-sm border border-[#6d7782] bg-white leading-[15px] outline-none"><option>没有选择过滤器</option></select>
        <svg class="pointer-events-none absolute top-px right-px h-[15px] w-[17px]" viewBox="0 0 17 15"><path fill="#7db9ee" stroke="#4888c8" d="M.5.5h16v14H.5z" /><path fill="#cfe6fb" d="M1 1h15v6H1z" /><path d="M3 4h11l-5.500 6z" /></svg>
      </label>
      <label class="relative mr-1 flex">
        <select aria-label="选择范围" class="h-[17px] w-[120px] appearance-none rounded-sm border border-[#6d7782] bg-white leading-[15px] outline-none"><option>整个装配</option></select>
        <svg class="pointer-events-none absolute top-px right-px h-[15px] w-[17px]" viewBox="0 0 17 15"><path fill="#7db9ee" stroke="#4888c8" d="M.5.5h16v14H.5z" /><path fill="#cfe6fb" d="M1 1h15v6H1z" /><path d="M3 4h11l-5.500 6z" /></svg>
      </label>
      <button type="button" title="链接" class="opacity-60"><svg class="h-4 w-[23px]" viewBox="0 0 16 16" fill="#888" stroke="#444"><path d="m0 7 4-2 4 2v6l-4 2-4-2z" /><circle cx="6" cy="4" r="3" fill="none" /><circle cx="12" cy="4" r="3" fill="#998" /><circle cx="12" cy="10" r="3.500" fill="#998" /></svg></button>
      <div class="mx-0.5 h-[22px] border-l-2 border-white/70"></div>
      <button type="button" title="重置过滤器" class="opacity-60"><svg class="h-4 w-[23px]" viewBox="0 0 16 16"><path fill="#456" d="m0 5 5-4v2q4 1 4-2h2q0 6-6 5v2z" /><path fill="#987840" d="M6 7h9l-3 4v5l-3-1v-4z" /></svg></button>
      <button type="button" title="选择过滤" class="border border-[#d02020] bg-[#f0e8e8]"><svg class="size-[15px]" viewBox="0 0 15 15"><circle cx="5" cy="5" r="3" fill="none" stroke="#801010" /><path stroke="#801010" d="M5 0v10M0 5h10" /><path fill="#f0b020" stroke="#a07010" stroke-width=".5" d="M7 8h7l-2 3v4l-2-1v-3z" /></svg></button>
      <button type="button" title="过滤列表"><svg class="h-6 w-4"><use href="#dn" /></svg></button>
      <button type="button" title="取消选择" class="opacity-60"><svg class="h-4 w-[23px]" viewBox="0 0 16 16" fill="none" stroke="#444"><path stroke-width="2" d="M1 4q6-5 7 4" /><circle cx="10" cy="10" r="3" /><path d="M10 5v10M5 10h10" /></svg></button>
      <div class="mx-0.5 h-[22px] border-l-2 border-white/70"></div>
      <button type="button" title="矩形选择"><svg class="h-4 w-[22px]" viewBox="0 0 16 16"><path fill="none" stroke="#000" stroke-width="1.500" stroke-dasharray="2 2" d="M1 2h14v12H1z" /><path fill="#d01010" d="M0 1h3v3H0zM13 13h3v3h-3z" /></svg></button>
      <button type="button" title="选择列表"><svg class="h-6 w-3"><use href="#dn" /></svg></button>
      <div class="mx-0.5 h-[22px] border-l-2 border-white/70"></div>
      <button type="button" title="着色隐藏" class="rounded-xs border border-[#555] bg-white py-0.5"><svg class="h-[17px] w-[21px]" viewBox="0 0 17 17"><path fill="#ccd4e4" stroke="#334" d="m1 11 4-8q4-2 7 0l4 3v6l-6 3z" /><path fill="#fff" stroke="#334" d="m6 8 6-3 4 2v5l-6 3-4-3z" /><path stroke="#c22" d="m9 7 3 2" /></svg></button>
      <button type="button" title="着色"><svg class="h-[17px] w-[23px]" viewBox="0 0 17 17"><path fill="#68a0f0" d="m1 4 7-3 8 3v9l-7 4-8-3z" /><path fill="#b8e0f8" d="m1 4 7-3 8 3-7 3z" /><path fill="#2c60c8" d="m9 7 7-3v9l-7 4z" /><path fill="none" stroke="#e06060" stroke-dasharray="1 1" d="m1 4 8 3 7-3M9 7v10" /></svg></button>
      <div class="mx-0.5 h-[22px] border-l-2 border-white/70"></div>
      <div class="flex items-center [&_svg]:h-[17px]">
        <button type="button" title="启用捕捉点" class="rounded-xs border border-[#555] bg-white py-0.5"><svg class="w-[21px]" viewBox="0 0 17 17"><use href="#go" x="0" y="0" width="4" height="6" /><path fill="#c22" d="m0 10 4 2-4 3z" /><path fill="#f0e040" stroke="#000" d="m10 1 3 3-3 3-3-3zM10 10l3 3-3 3-3-3zM5 6l2 2.500L5 11 3 8.500zM15 6l2 2.500-2 2.500-2-2.500z" /><path stroke="#000" d="m7 6 6 6M13 6l-6 6" /></svg></button>
        <button type="button" title="端点" class="rounded-xs border border-[#555] bg-white py-0.5"><svg class="w-[21px]" viewBox="0 0 17 17"><path stroke="#000" stroke-width="1.300" d="M3 14 14 3" /><path fill="#d01010" d="M12 2h3v3h-3z" /></svg></button>
        <button type="button" title="中点" class="rounded-xs border border-[#555] bg-white py-0.5"><svg class="w-[21px]" viewBox="0 0 17 17"><path stroke="#000" stroke-width="1.300" d="M2 15 15 2" /><path fill="#d01010" d="M7 7h3v3H7z" /></svg></button>
        <button type="button" title="控制点"><svg class="w-[23px]" viewBox="0 0 17 17"><path fill="none" stroke="#000" stroke-width="1.300" d="M2 2q6-1 6 5 0 7 7 8" /><path fill="#d01010" d="M7 6h3v3H7z" /></svg></button>
        <button type="button" title="样条点" class="rounded-xs border border-[#555] bg-white py-0.5"><svg class="w-[21px]" viewBox="0 0 17 17"><path fill="none" stroke="#8020a0" stroke-width="1.500" d="m2 10 4-7 5 10 4-8" /><path fill="#d01010" d="M1 8h3v3H1zM5 2h3v3H5zM9 12h3v3H9zM14 6h3v3h-3z" /></svg></button>
        <button type="button" title="交点"><svg class="w-[23px]" viewBox="0 0 17 17"><path fill="none" stroke="#000" stroke-width="1.300" d="M1 13q7-12 15 0M8.500 2v14" /><path fill="#d01010" d="M7 6h3v3H7z" /></svg></button>
        <button type="button" title="圆心" class="rounded-xs border border-[#555] bg-white py-0.5"><svg class="w-[21px]" viewBox="0 0 17 17"><circle cx="8.500" cy="8.500" r="7" fill="none" stroke="#000" stroke-width="1.500" /><path fill="#d01010" d="M7 7h3v3H7z" /></svg></button>
        <button type="button" title="象限点"><svg class="w-[23px]" viewBox="0 0 17 17"><circle cx="8.500" cy="8.500" r="6" fill="none" stroke="#000" stroke-width="1.300" /><path fill="#d01010" d="M7 1h3v3H7zM7 13h3v3H7zM1 7h3v3H1zM13 7h3v3h-3z" /></svg></button>
        <button type="button" title="现有点" class="rounded-xs border border-[#555] bg-white py-0.5"><svg class="w-[21px]" viewBox="0 0 17 17"><path stroke="#000" stroke-width="1.300" d="M8.500 2v13M2 8.500h13" /><path fill="#d01010" d="M7 7h3v3H7z" /></svg></button>
        <button type="button" title="曲线上的点" class="rounded-xs border border-[#555] bg-white py-0.5"><svg class="w-[21px]" viewBox="0 0 17 17"><path stroke="#000" stroke-width="1.300" d="M3 15 15 3" /><path fill="#d01010" d="M4 11h3v3H4z" /></svg></button>
        <button type="button" title="面上的点"><svg class="w-[23px]" viewBox="0 0 17 17"><path fill="url(#pale)" stroke="#3868b0" d="M1 4q7-4 15-1-3 3-2 7-3 0-3 6-5-4-10-3z" /><path fill="#d01010" d="M8 5h3v3H8z" /></svg></button>
      </div>
      <div class="mx-0.5 h-[22px] border-l-2 border-white/70"></div>
      <button type="button" title="栅格点"><svg class="h-4 w-[23px]" viewBox="0 0 16 16"><path fill="none" stroke="#000" stroke-width="1.200" d="m3 2 10 2v11L3 13zM3 6l10 2M3 10l10 1M6 2v12M10 3v12" /><path fill="#d01010" d="M8 6h3v3H8z" /></svg></button>
    </div>

    <div class="flex min-h-0 flex-1">
      <!-- Resource bar -->
      <aside class="flex w-[31px] shrink-0 flex-col items-end border-r border-[#777] bg-[#adadad] [&>button]:flex [&>button]:w-[27px] [&>button]:items-center [&>button]:justify-center [&>button]:rounded-l-sm [&>button]:border [&>button]:border-r-0 [&>button]:border-[#666] [&_svg]:size-6">
        <div class="mb-[30px] flex h-[14px] w-full items-center justify-center">
          <svg viewBox="0 0 24 24" class="mt-3.5"><circle cx="12" cy="12" r="4.500" fill="none" stroke="#000" stroke-width="1.500" /><path stroke="#000" stroke-width="2" d="M12 5v3M12 16v3M5 12h3M16 12h3M7 7l2 2M15 15l2 2M17 7l-2 2M9 15l-2 2" /></svg>
        </div>
        <button type="button" title="装配导航器" class="h-[41px] bg-[#dadada]"><svg viewBox="0 0 24 24"><path fill="#f7c92c" stroke="#a07400" d="m2 3 3-2 4 1v5l-3 2-4-1zM1 9l3-2 4 1v5l-3 2-4-1zM7 8l4-1 3 1v4l-3 2-4-1zM14 17l3-2 5 1v5l-3 2-5-1z" /><path fill="none" stroke="#1030a0" stroke-width="1.300" d="M5 14v10M5 18h6" /><path stroke="#000" d="M15 11.500h8" /></svg></button>
        <button type="button" title="约束导航器" class="mt-px h-10 bg-[#dadada]"><svg viewBox="0 0 24 24"><path fill="#1010c8" d="m4 2 7 5-7 5zM20 2l-7 5 7 5z" /><path stroke="#000" stroke-dasharray="2 1" d="M12 1v22" /><path fill="#f8e820" stroke="#806000" d="M1.500 14.500h8v8h-8z" /><path fill="#d01818" stroke="#700" d="m14 14 9 9h-9z" /></svg></button>
        <button type="button" title="部件导航器" class="h-11 border-y-0! bg-[#ececec]"><svg viewBox="0 0 24 24"><path fill="#b85a9c" stroke="#6c1c5c" d="M1.500 3.500q4-3 9 0v8q-5 3-9 0z" /><path fill="#e0a8d0" d="M2 3q4-2 8 0-4 2-8 0z" /><path stroke="#000" d="M14 11.500h9" /><path fill="none" stroke="#1030a0" stroke-width="1.300" d="M5.500 14v10M5 19h6" /><circle cx="17" cy="19" r="4" fill="none" stroke="#8a2870" stroke-width="1.300" /><circle cx="17" cy="19" r="1.500" fill="#8a2870" /></svg></button>
        <button type="button" title="重用库" class="mb-[13px] h-[41px] bg-[#dadada]"><svg viewBox="0 0 24 24"><path fill="#e86818" stroke="#803000" d="M.5 7.500h6v16h-6z" /><path fill="#28b028" stroke="#0a600a" d="M6.500 7.500h6v16h-6z" /><path fill="#2c70d8" stroke="#103c90" d="M12.500 7.500h6v16h-6zM18.500 7.500l5-5v15l-5 6z" /><path fill="#f4f0e0" stroke="#555" stroke-width=".6" d="m1 7 5-5h4L6 7zM7 7l5-5h4l-4 5zM13 7l5-5h5l-5 5z" /><path stroke="#fff" d="M1 11h5M7 11h5M13 11h5M1 20h5M7 20h5M13 20h5" opacity=".6" /></svg></button>
        <button type="button" title="HD3D 工具" class="mb-[13px] h-[41px] bg-[#dadada]"><svg viewBox="0 0 24 24"><path fill="none" stroke="#2c60c8" stroke-width="2" d="M9 2q13 1 14 14M9 6q9 0 10 10" /><circle cx="8" cy="16" r="7.500" fill="#2478e0" stroke="#1448a0" /><path fill="#fff" d="M7 10h3v2H7zM6 13h4v6h1v1H6v-1h1v-5H6z" /></svg></button>
        <button type="button" title="Internet Explorer" class="mb-[13px] h-[41px] bg-[#dadada]"><svg viewBox="0 0 24 24"><path fill="#fff" stroke="#2458c0" stroke-width="1.500" d="M4 2h12l5 5v15H4z" /><path fill="#b8d4f8" stroke="#2458c0" d="M16 2v5h5z" /><circle cx="12" cy="15" r="5.500" fill="#208028" /><path fill="#7ab8f0" d="m12 10 4 6-3 4-4-2z" /></svg></button>
        <button type="button" title="历史记录" class="mb-px h-[41px] bg-[#dadada]"><svg viewBox="0 0 24 24"><circle cx="12" cy="12" r="10" fill="#e4ecfa" stroke="#666" stroke-width="2" /><circle cx="12" cy="12" r="8" fill="none" stroke="#456" stroke-dasharray="1 3.200" /><path fill="none" stroke="#000" stroke-width="1.500" d="M12 5v7h6" /></svg></button>
        <button type="button" title="角色" class="h-[41px] bg-[#dadada]"><svg viewBox="0 0 24 24"><path fill="#ddd" stroke="#444" d="m9 3 4-2h7l3 4-5-1-2 2-5 7-3-1 4-6z" /><path fill="#8890a8" stroke="#334" d="m2 12 4 3 4-4 3 2-1 5 3 2-1 3H8l-4-6z" /><circle cx="4" cy="20" r="3" fill="#f09020" /></svg></button>
      </aside>

      <!-- Part navigator -->
      <section class="flex w-[295px] shrink-0 flex-col border-t border-r border-[#888] bg-[#ececec] pr-[9px] pl-[7px]">
        <div class="flex h-[29px] shrink-0 items-center justify-between pl-1 pr-[5px]">
          <h2 class="text-[13px] leading-4 font-bold">部件导航器</h2>
          <button type="button" title="最大化" class="mt-0.5 h-3 w-[13px] border border-t-2 border-black"></button>
        </div>
        <div class="flex min-h-0 flex-1 flex-col border border-b-0 border-[#666] bg-white">
          <table class="w-full table-fixed border-collapse text-[#222] [&_td]:border-b [&_td]:border-[#e5e5e5] [&_td]:p-0 [&_td:first-child]:border-r [&_tbody_tr]:h-5 [&_tbody_tr:nth-child(even)]:bg-[#f7f7f7]">
            <thead>
              <tr class="h-[17px] border-b border-[#888] bg-linear-to-b from-white from-50% to-[#dcdfe2] to-50% text-left leading-4 text-black">
                <th class="w-[201px] border-r border-[#aaa] p-0 pl-[7px] font-normal"><span class="flex items-center gap-3.5">名称 <svg class="h-[5px] w-2.5" viewBox="0 0 10 5"><path d="m5 0 5 5H0z" /></svg></span></th>
                <th class="p-0 pl-[5px] font-normal">最新</th>
              </tr>
            </thead>
            <tbody>
              <tr>
                <td><div class="flex h-[19px] items-center"><svg class="h-[19px] w-5" viewBox="0 0 20 19"><path fill="none" stroke="#888" stroke-dasharray="1 1" d="M9.500 19v-9H20" /></svg>
                  <svg class="mr-[3px] size-4" viewBox="0 0 16 16"><circle cx="8" cy="8" r="6.800" fill="#dce6f4" stroke="#667" stroke-width="1.600" /><path fill="none" stroke="#000" stroke-width="1.300" d="M8 3v5h4" /></svg>历史记录模式</div></td>
                <td></td>
              </tr>
              <tr>
                <td><div class="flex h-[19px] items-center"><svg class="h-[19px] w-5" viewBox="0 0 20 19"><path stroke="#888" stroke-dasharray="1 1" d="M9.500 0v19M14 8.500h6" /><rect x="5.500" y="4.500" width="8" height="8" rx="1" fill="#fff" stroke="#888" /><path stroke="#000" d="M7 8.500h5M9.500 6v5" /></svg>
                  <svg class="mr-[3px] size-4" viewBox="0 0 16 16" fill="none" stroke="#109050"><path d="m1 4 6-3 6 3v7l-6 3-6-3zM1 4l6 2 6-2M7 6v8M1 11l6-3 6 3M7 1v6" /><path stroke="#e03010" stroke-width="1.500" d="m9 14 6-3" /></svg>模型视图</div></td>
                <td></td>
              </tr>
              <tr>
                <td><div class="flex h-[19px] items-center"><svg class="h-[19px] w-5" viewBox="0 0 20 19"><path stroke="#888" stroke-dasharray="1 1" d="M9.500 0v19M14 8.500h6" /><rect x="5.500" y="4.500" width="8" height="8" rx="1" fill="#fff" stroke="#888" /><path stroke="#000" d="M7 8.500h5M9.500 6v5" /></svg>
                  <svg class="ml-0.5 h-3 w-[13px]"><use href="#check" /></svg><svg class="mr-[3px] ml-px size-4" viewBox="0 0 16 16"><path fill="#f4d8d8" stroke="#d01010" d="M1.500 5.500 11 3v9l-9.500 2zM1.500 5.500 5 2l9-1v6l-3 5" /><circle cx="7" cy="8" r="3" fill="#4858c8" stroke="#101860" /><path fill="#111" d="M11 8h3v5h-3z" /></svg>摄像机</div></td>
                <td></td>
              </tr>
              <tr>
                <td><div class="flex h-[19px] items-center"><svg class="h-[19px] w-5" viewBox="0 0 20 19"><path stroke="#888" stroke-dasharray="1 1" d="M9.500 0v19M10 9.500h10" /></svg>
                  <svg class="mr-[3px] size-4" viewBox="0 0 16 16"><path fill="#e8b030" stroke="#8c5c00" d="M.5 14.500v-10h5l1 2h7v8z" /><path fill="url(#gold)" stroke="#8c5c00" d="m.5 14.500 4-6h11l-3 6z" /><path stroke="#1a2a80" d="M8 1.500h7M8 3.500h7" /></svg>用户表达式</div></td>
                <td></td>
              </tr>
              <tr>
                <td><div class="flex h-[19px] items-center"><svg class="h-[19px] w-5" viewBox="0 0 20 19"><path stroke="#888" stroke-dasharray="1 1" d="M9.500 0v5M14 8.500h6" /><rect x="5.500" y="4.500" width="8" height="8" rx="1" fill="#fff" stroke="#888" /><path stroke="#000" d="M7 8.500h5" /></svg>
                  <svg class="mr-[3px] size-4" viewBox="0 0 16 16"><path fill="#e8b030" stroke="#8c5c00" d="M.5 14.500v-10h5l1 2h7v8z" /><path fill="url(#gold)" stroke="#8c5c00" d="m.5 14.500 4-6h11l-3 6z" /></svg>模型历史记录</div></td>
                <td></td>
              </tr>
              <tr class="text-[#999]">
                <td><label class="flex h-[19px] items-center"><svg class="h-[19px] w-[42px]" viewBox="0 0 42 19"><path stroke="#888" stroke-dasharray="1 1" d="M29.500 0v19M30 10.500h9" /></svg>
                  <span class="relative mr-0.5"><input type="checkbox" checked class="block size-[11px] appearance-none bg-white outline outline-black" /><svg class="pointer-events-none absolute top-px left-px size-2.5"><use href="#check" /></svg></span>
                  <svg class="mr-0.5 size-4" viewBox="0 0 16 16" fill="#ccc" stroke="#333"><path d="m2 4 5 3v7l-5-3zM7 8l5-2v4l-5 2z" /><path stroke="#109010" d="m8 7 6-3" /><path stroke="#d01010" d="m8 11 6 4" /><path stroke="#1010c0" d="M2 0v4" /></svg>基准坐标系<span class="ml-1 font-['Liberation_Mono'] text-[10px] whitespace-pre"> (0)</span></label></td>
                <td class="pl-1.5!"><svg class="h-[13px] w-3"><use href="#check" /></svg></td>
              </tr>
              <tr>
                <td><label class="flex h-[19px] items-center font-bold"><svg class="h-[19px] w-[42px]" viewBox="0 0 42 19"><path stroke="#888" stroke-dasharray="1 1" d="M29.500 0v10M30 10.500h9" /></svg>
                  <span class="relative mr-0.5"><input type="checkbox" checked class="block size-[11px] appearance-none bg-white outline outline-black" /><svg class="pointer-events-none absolute top-px left-px size-2.5"><use href="#check" /></svg></span>
                  <svg class="mr-0.5 size-4" viewBox="0 0 16 16"><path fill="none" stroke="#2090e8" stroke-width="2" stroke-dasharray="2 2" d="M1 1h14v14H1z" /><path fill="#fff" stroke="#000" d="M2.500 3.500h4v4h-4zM2.500 10.500h4v3h-4zM8.500 8.500h5v5h-5z" /><use href="#pencil" x="7" y="1" width="7" height="9" /></svg>草图<span class="ml-1 font-['Liberation_Mono'] text-[11px] whitespace-pre"> (1) “SKET...</span></label></td>
                <td class="pl-1.5!"><svg class="h-[13px] w-3"><use href="#check" /></svg></td>
              </tr>
            </tbody>
          </table>
          <!-- Blank striped rows -->
          <div class="flex flex-1 bg-[repeating-linear-gradient(#f7f7f7_0_19px,#e5e5e5_19px_20px,#fff_20px_39px,#e5e5e5_39px_40px)]"><div class="w-[201px] border-r border-[#e5e5e5]"></div></div>
        </div>
      </section>

      <!-- Sketch view, drawn around the sketch origin -->
      <main class="min-w-0 flex-1 overflow-hidden bg-[#d3d4d6]">
        <svg class="h-full w-full font-['Liberation_Sans']" role="img" aria-label="草图">
          <defs>
            <polygon id="ring" points="0,-75 19.400,-72.400 37.500,-65 53,-53 65,-37.500 72.400,-19.400 75,0 72.400,19.400 65,37.500 53,53 37.500,65 19.400,72.400 0,75 -19.400,72.400 -37.500,65 -53,53 -65,37.500 -72.400,19.400 -75,0 -72.400,-19.400 -65,-37.500 -53,-53 -37.500,-65 -19.400,-72.400" fill="none" stroke="#0000f8" stroke-width="1.700" />
            <g id="joint"><circle r="5.500" fill="none" stroke="#4a7ad0" /><path stroke="#2a62d8" stroke-width="1.200" d="M0-11.500v23" /><path stroke="#4a7ad0" d="M-5.500 0h11" /><circle r="3" fill="#0000e8" /></g>
          </defs>
          <g transform="translate(436.500 240.500)">
            <path fill="#a8b8c4" stroke="#0c96f8" stroke-width="1.500" d="M-42-42h84v84h-84z" />
            <g fill="none" stroke="#6496cc">
              <path d="M0 0v54M286 0v54M0 43h286M0 75l-57 46M286 75l72-16" />
            </g>
            <path fill="#6496cc" d="m0 43 12-2v4zM286 43l-12-2v4zM-57 121l9-4-3-4zM358 59l-11 0 1 4z" />
            <use href="#ring" y="75" />
            <use href="#ring" x="286" y="75" />
            <path stroke="#0000f8" stroke-width="1.500" d="M0 0h286" />
            <path stroke="#0000f8" stroke-width="2" d="M0 149.500h286" />
            <path stroke="#0a3ce0" stroke-width="3" d="M134 0h18" />
            <use href="#joint" />
            <use href="#joint" x="286" />
            <use href="#joint" y="149" />
            <use href="#joint" x="286" y="149" />
            <circle cy="75" r="3" fill="#0000e8" />
            <circle cx="286" cy="75" r="3" fill="#0000e8" />
            <text x="0" y="0" font-size="13" fill="#3050e0">ZC</text>
            <path fill="#349634" d="M-2 0v-63h-2.500l4.500-20 4.500 20H2V0z" />
            <path stroke="#1c6c24" stroke-width="3" d="M0-28v-16" />
            <path fill="#e03838" d="M0-2h63v-2.500l20 4.500-20 4.500V2H0z" />
            <path stroke="#a82020" stroke-width="3" d="M28 0h20" />
            <circle r="3" fill="#0000e8" />
            <g font-size="13">
              <text x="-4" y="-85" fill="#349634">Y</text>
              <text x="5" y="-58" fill="#349634">YC</text>
              <text x="42" y="-5" fill="#e03838">XC</text>
              <text x="85" y="5" fill="#e03838">X</text>
            </g>
            <g fill="#6496cc" font-family="Liberation Mono" font-size="11">
              <text x="133" y="37">240</text>
              <text x="-45" y="105" transform="rotate(-39 -45 105)">R62.8</text>
              <text x="307" y="64" transform="rotate(-12 307 64)">R62.8</text>
            </g>
          </g>
        </svg>
      </main>
    </div>
  </body>
</html>
